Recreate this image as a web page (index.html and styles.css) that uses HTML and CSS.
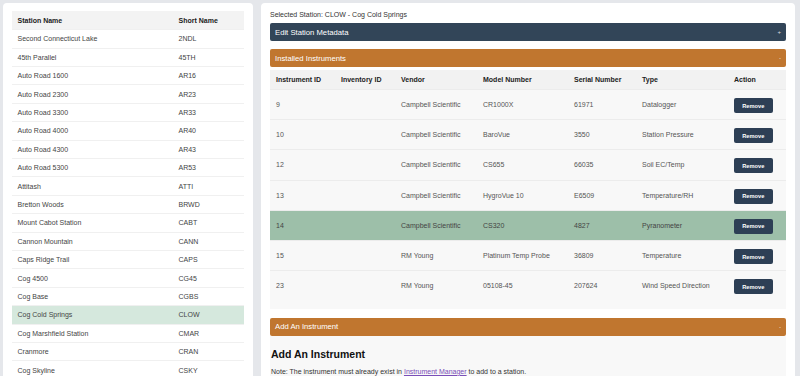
FILE: index.html
```html
<!DOCTYPE html>
<html>
<head>
<meta charset="utf-8">
<link rel="stylesheet" href="styles.css">
</head>
<body>
<div class="page">
  <div class="card stations">
    <table class="st-table">
      <colgroup><col class="c-name"><col></colgroup>
      <thead><tr><th>Station Name</th><th>Short Name</th></tr></thead>
      <tbody>
        <tr><td>Second Connecticut Lake</td><td>2NDL</td></tr>
        <tr><td>45th Parallel</td><td>45TH</td></tr>
        <tr><td>Auto Road 1600</td><td>AR16</td></tr>
        <tr><td>Auto Road 2300</td><td>AR23</td></tr>
        <tr><td>Auto Road 3300</td><td>AR33</td></tr>
        <tr><td>Auto Road 4000</td><td>AR40</td></tr>
        <tr><td>Auto Road 4300</td><td>AR43</td></tr>
        <tr><td>Auto Road 5300</td><td>AR53</td></tr>
        <tr><td>Attitash</td><td>ATTI</td></tr>
        <tr><td>Bretton Woods</td><td>BRWD</td></tr>
        <tr><td>Mount Cabot Station</td><td>CABT</td></tr>
        <tr><td>Cannon Mountain</td><td>CANN</td></tr>
        <tr><td>Caps Ridge Trail</td><td>CAPS</td></tr>
        <tr><td>Cog 4500</td><td>CG45</td></tr>
        <tr><td>Cog Base</td><td>CGBS</td></tr>
        <tr class="sel"><td>Cog Cold Springs</td><td>CLOW</td></tr>
        <tr><td>Cog Marshfield Station</td><td>CMAR</td></tr>
        <tr><td>Cranmore</td><td>CRAN</td></tr>
        <tr><td>Cog Skyline</td><td>CSKY</td></tr>
      </tbody>
    </table>
  </div>
  <div class="card detail">
    <div class="selected">Selected Station: CLOW - Cog Cold Springs</div>
    <div class="bar navy"><span>Edit Station Metadata</span><span class="sign">+</span></div>
    <div class="bar orange tight"><span>Installed Instruments</span><span class="sign">-</span></div>
    <div class="panel">
      <table class="in-table">
        <colgroup>
          <col class="w1"><col class="w2"><col class="w3"><col class="w4"><col class="w5"><col class="w6"><col>
        </colgroup>
        <thead>
          <tr><th>Instrument ID</th><th>Inventory ID</th><th>Vendor</th><th>Model Number</th><th>Serial Number</th><th>Type</th><th>Action</th></tr>
        </thead>
        <tbody>
          <tr><td>9</td><td></td><td>Campbell Scientific</td><td>CR1000X</td><td>61971</td><td>Datalogger</td><td><button class="btn">Remove</button></td></tr>
          <tr><td>10</td><td></td><td>Campbell Scientific</td><td>BaroVue</td><td>3550</td><td>Station Pressure</td><td><button class="btn">Remove</button></td></tr>
          <tr><td>12</td><td></td><td>Campbell Scientific</td><td>CS655</td><td>66035</td><td>Soil EC/Temp</td><td><button class="btn">Remove</button></td></tr>
          <tr><td>13</td><td></td><td>Campbell Scientific</td><td>HygroVue 10</td><td>E6509</td><td>Temperature/RH</td><td><button class="btn">Remove</button></td></tr>
          <tr class="hl"><td>14</td><td></td><td>Campbell Scientific</td><td>CS320</td><td>4827</td><td>Pyranometer</td><td><button class="btn">Remove</button></td></tr>
          <tr><td>15</td><td></td><td>RM Young</td><td>Platinum Temp Probe</td><td>36809</td><td>Temperature</td><td><button class="btn">Remove</button></td></tr>
          <tr><td>23</td><td></td><td>RM Young</td><td>05108-45</td><td>207624</td><td>Wind Speed Direction</td><td><button class="btn">Remove</button></td></tr>
        </tbody>
      </table>
    </div>
    <div class="bar orange flush"><span>Add An Instrument</span><span class="sign">-</span></div>
    <div class="add">
      <h2>Add An Instrument</h2>
      <p class="note">Note: The instrument must already exist in <a href="#">Instrument Manager</a> to add to a station.</p>
    </div>
  </div>
</div>
</body>
</html>
```
FILE: styles.css
```css
html, body {
  margin: 0;
  padding: 0;
  height: 100%;
  overflow: hidden;
}
body {
  background: #e5e7eb;
  font-family: "Liberation Sans", Arial, sans-serif;
  font-size: 7px;
  color: #444;
}
.page {
  display: flex;
  gap: 8px;
  padding: 3px 5px 0 3px;
  align-items: flex-start;
}
.card {
  background: #fff;
  border-radius: 4px;
  min-height: 420px;
}
.stations {
  width: 250px;
  flex: none;
  box-sizing: border-box;
  padding: 8px 9px 0 9px;
}
.st-table {
  width: 100%;
  border-collapse: collapse;
  table-layout: fixed;
}
.st-table .c-name { width: 161px; }
.st-table th {
  background: #f3f3f3;
  text-align: left;
  font-weight: bold;
  color: #222;
  height: 18.3px;
  padding: 0 5.5px;
}
.st-table td {
  height: 18.4px;
  padding: 0 5.5px;
  border-top: 1px solid #f0f0f0;
  box-sizing: border-box;
  color: #444;
}
.st-table tr.sel td { background: #d5e8dd; }

.detail {
  flex: 1;
  padding: 7px 9px 0 9px;
}
.selected {
  line-height: 10px;
  margin-bottom: 3px;
  color: #333;
}
.bar {
  display: flex;
  justify-content: space-between;
  align-items: center;
  height: 18px;
  padding: 0 5px;
  border-radius: 2px;
  color: #fff;
  font-size: 7.7px;
  font-weight: normal;
  margin-bottom: 8px;
}
.bar .sign {
  font-size: 6px;
  opacity: 0.8;
}
.navy { background: #324558; }
.orange { background: #c0762f; }
.bar.tight { margin-bottom: 3px; }
.bar.flush { margin-bottom: 0; }
.panel {
  background: #f8f8f8;
  padding-bottom: 8px;
  margin-bottom: 9px;
}
.in-table {
  width: 100%;
  border-collapse: collapse;
  table-layout: fixed;
}
.in-table .w1 { width: 65px; }
.in-table .w2 { width: 60px; }
.in-table .w3 { width: 82px; }
.in-table .w4 { width: 91px; }
.in-table .w5 { width: 68px; }
.in-table .w6 { width: 92px; }
.in-table th {
  background: #f2f2f2;
  text-align: left;
  font-weight: bold;
  color: #222;
  height: 19px;
  padding: 0 6px;
  white-space: nowrap;
}
.in-table td {
  height: 30.2px;
  padding: 0 6px;
  border-top: 1px solid #ececec;
  box-sizing: border-box;
  color: #555;
  white-space: nowrap;
  overflow: visible;
}
.in-table tr.hl td { background: #9dbfa9; color: #444; }
.btn {
  display: block;
  width: 38.6px;
  height: 15px;
  margin-top: 2px;
  padding: 0;
  border: none;
  border-radius: 2px;
  background: #2d3f55;
  color: #fff;
  font-family: "Liberation Sans", Arial, sans-serif;
  font-weight: bold;
  font-size: 5.7px;
}
.add {
  background: #f8f8f8;
  padding: 12px 1px 0 1px;
  min-height: 60px;
}
.add h2 {
  margin: 0;
  font-size: 10.5px;
  line-height: 13px;
  color: #111;
}
.note {
  margin: 6px 0 0 0;
  line-height: 10px;
  color: #333;
}
.note a { color: #7a4fb8; }
```
